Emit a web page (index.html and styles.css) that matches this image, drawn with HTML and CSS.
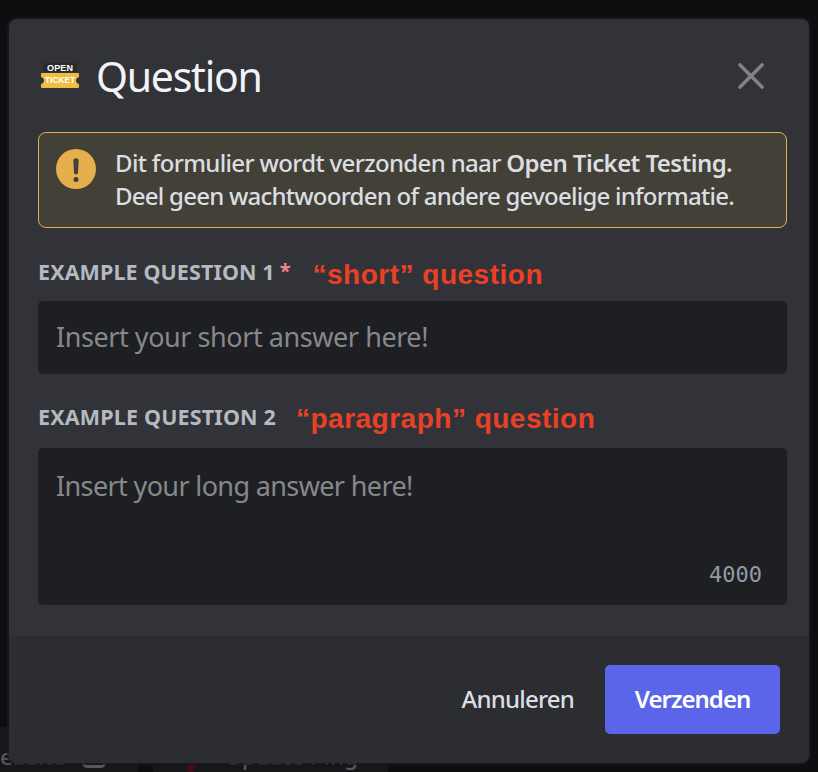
FILE: index.html
```html
<!DOCTYPE html>
<html lang="nl">
<head>
<meta charset="utf-8">
<title>Question</title>
<link rel="stylesheet" href="styles.css">
</head>
<body>
<div class="backdrop" aria-hidden="true">
  <div class="chip chip-site"><span>ebsite</span><i class="chip-box"></i></div>
  <div class="chip chip-ping"><i class="chip-dot"></i><span class="chip-caret">‹</span><span>Update Ping</span></div>
</div>
<main class="modal">
  <header class="header">
    <svg class="logo" viewBox="0 0 38 26" width="38" height="26">
      <rect x="2" y="0" width="34" height="9" fill="#292a2d"/>
      <path d="M1 10H37Q38 10 38 11V14C34 15 34 20 38 21V24Q38 25 37 25H1Q0 25 0 24V21C4 20 4 15 0 14V11Q0 10 1 10Z" fill="#efbd42"/>
      <text class="logo-text" x="6" y="7.5" textLength="26" fill="#fff">OPEN</text>
      <text class="logo-text" x="4" y="19.7" textLength="30" lengthAdjust="spacingAndGlyphs" fill="#fff">TICKET</text>
    </svg>
    <h1 class="title">Question</h1>
    <svg class="close" viewBox="0 0 28 28" width="28" height="28"><path d="M3 3L25 25M25 3L3 25" stroke="#808288" stroke-width="3.6" stroke-linecap="round"/></svg>
  </header>
  <section class="notice">
    <svg class="warn" viewBox="0 0 40 40" width="40" height="40"><circle cx="20" cy="20" r="20" fill="#e5b04c"/><path d="M17.3 11Q17.3 9.3 20 9.3T22.7 11L22 24Q21.8 25.4 20 25.4T18 24Z" fill="#434038"/><circle cx="20" cy="30.5" r="2.5" fill="#434038"/></svg>
    <p class="notice-text"><span class="line-one">Dit formulier wordt verzonden naar </span><b>Open Ticket Testing.</b><br><span class="line-two">Deel geen wachtwoorden of andere gevoelige informatie.</span></p>
  </section>
  <div class="field-head"><label class="label">EXAMPLE QUESTION 1</label><span class="required">*</span><span class="note note-short">“short” question</span></div>
  <div class="input short">Insert your short answer here!</div>
  <div class="field-head second"><label class="label">EXAMPLE QUESTION 2</label><span class="note note-long">“paragraph” question</span></div>
  <div class="input long"><span>Insert your long answer here!</span><span class="count">4000</span></div>
  <footer class="footer"><button class="cancel">Annuleren</button><button class="submit">Verzenden</button></footer>
</main>
</body>
</html>
```

FILE: styles.css
```css
* { box-sizing: border-box; }
body { margin: 0; width: 818px; height: 772px; overflow: hidden; background: #0e0e10; font-family: "Noto Sans", sans-serif; position: relative; }
.backdrop { position: absolute; inset: auto 0 0 0; height: 45px; display: flex; gap: 15px; color: #57575a; font-size: 22.5px; line-height: 30px; font-weight: 500; }
.chip { height: 45px; background: #161719; display: flex; padding-top: 15px; white-space: nowrap; }
.chip-site { width: 138px; }
.chip-ping { width: 235px; }
.chip-box { width: 24px; height: 24px; margin: 2px 0 0 17px; border: 3px solid #57575a; border-radius: 5px; }
.chip-dot { width: 8px; height: 8px; border-radius: 4px; background: #4c0a14; margin: 22px 0 0 34px; }
.chip-caret { margin-left: 12px; }
.chip-caret + span { margin-left: 11px; }
.modal { position: relative; width: 800px; height: 744px; margin: 19px 0 0 9px; background: #323338; border-radius: 8px; display: flex; flex-direction: column; padding: 0 22px 0 29px; box-shadow: 0 0 0 2px rgba(24, 25, 27, .7); }
.header { display: flex; align-items: center; height: 113px; padding-left: 3px; flex: none; }
.logo-text { font: bold 9px "Liberation Sans", sans-serif; }
.title { margin: 0 auto 0 17px; font-size: 41px; line-height: 50px; font-weight: 400; color: #f2f3f5; letter-spacing: -1.25px; }
.close { margin-right: 22px; }
.notice { flex: none; height: 96px; border: 1px solid #e5b04c; border-radius: 8px; background: #434038; padding: 13px 17px; display: flex; gap: 19px; color: #dbdee1; }
.warn { margin-top: 3px; flex: none; }
.notice-text { margin: 0; font-size: 24px; line-height: 33px; font-weight: 500; white-space: nowrap; }
.notice-text b { font-weight: 600; letter-spacing: -.58px; }
.line-one { letter-spacing: -.66px; }
.line-two { letter-spacing: -.76px; }
.field-head { flex: none; height: 73px; display: flex; align-items: center; padding-top: 17px; }
.label { font-size: 21.5px; font-weight: 700; color: #b5bac1; letter-spacing: .1px; margin-top: -4px; }
.required { color: #f0868a; font-size: 20px; font-weight: 700; margin: -5px 0 0 5px; }
.note { font: bold 28px "Liberation Sans", sans-serif; color: #ea4025; }
.note-short { margin: 3px 0 0 22px; letter-spacing: .5px; }
.note-long { margin: -2px 0 0 20px; letter-spacing: .5px; }
.input { flex: none; background: #1e1f22; border-radius: 5px; color: #87888c; font-size: 27px; padding: 0 18px; }
.short { height: 73px; line-height: 72px; letter-spacing: -.44px; }
.second { height: 74px; }
.second .label { margin-top: -6px; letter-spacing: .17px; }
.long { height: 157px; display: flex; flex-direction: column; justify-content: space-between; padding: 19px 25px 15px 18px; line-height: 38px; letter-spacing: -.63px; }
.count { align-self: flex-end; font: 22px/30px "DejaVu Sans Mono", monospace; letter-spacing: 0; color: #949ba4; }
.footer { margin: 31px -22px 0 -29px; height: 127px; background: #2b2d31; border-radius: 0 0 8px 8px; display: flex; align-items: center; justify-content: flex-end; padding-right: 29px; flex: none; }
.footer button { border: 0; font: 500 24px "Noto Sans", sans-serif; height: 69px; padding: 0 0 2px; letter-spacing: -.8px; }
.cancel { background: none; color: #dbdee1; margin-right: 31px; }
.footer .submit { width: 175px; border-radius: 5px; background: #5b65ea; color: #fff; font-weight: 600; letter-spacing: -1px; }
```
